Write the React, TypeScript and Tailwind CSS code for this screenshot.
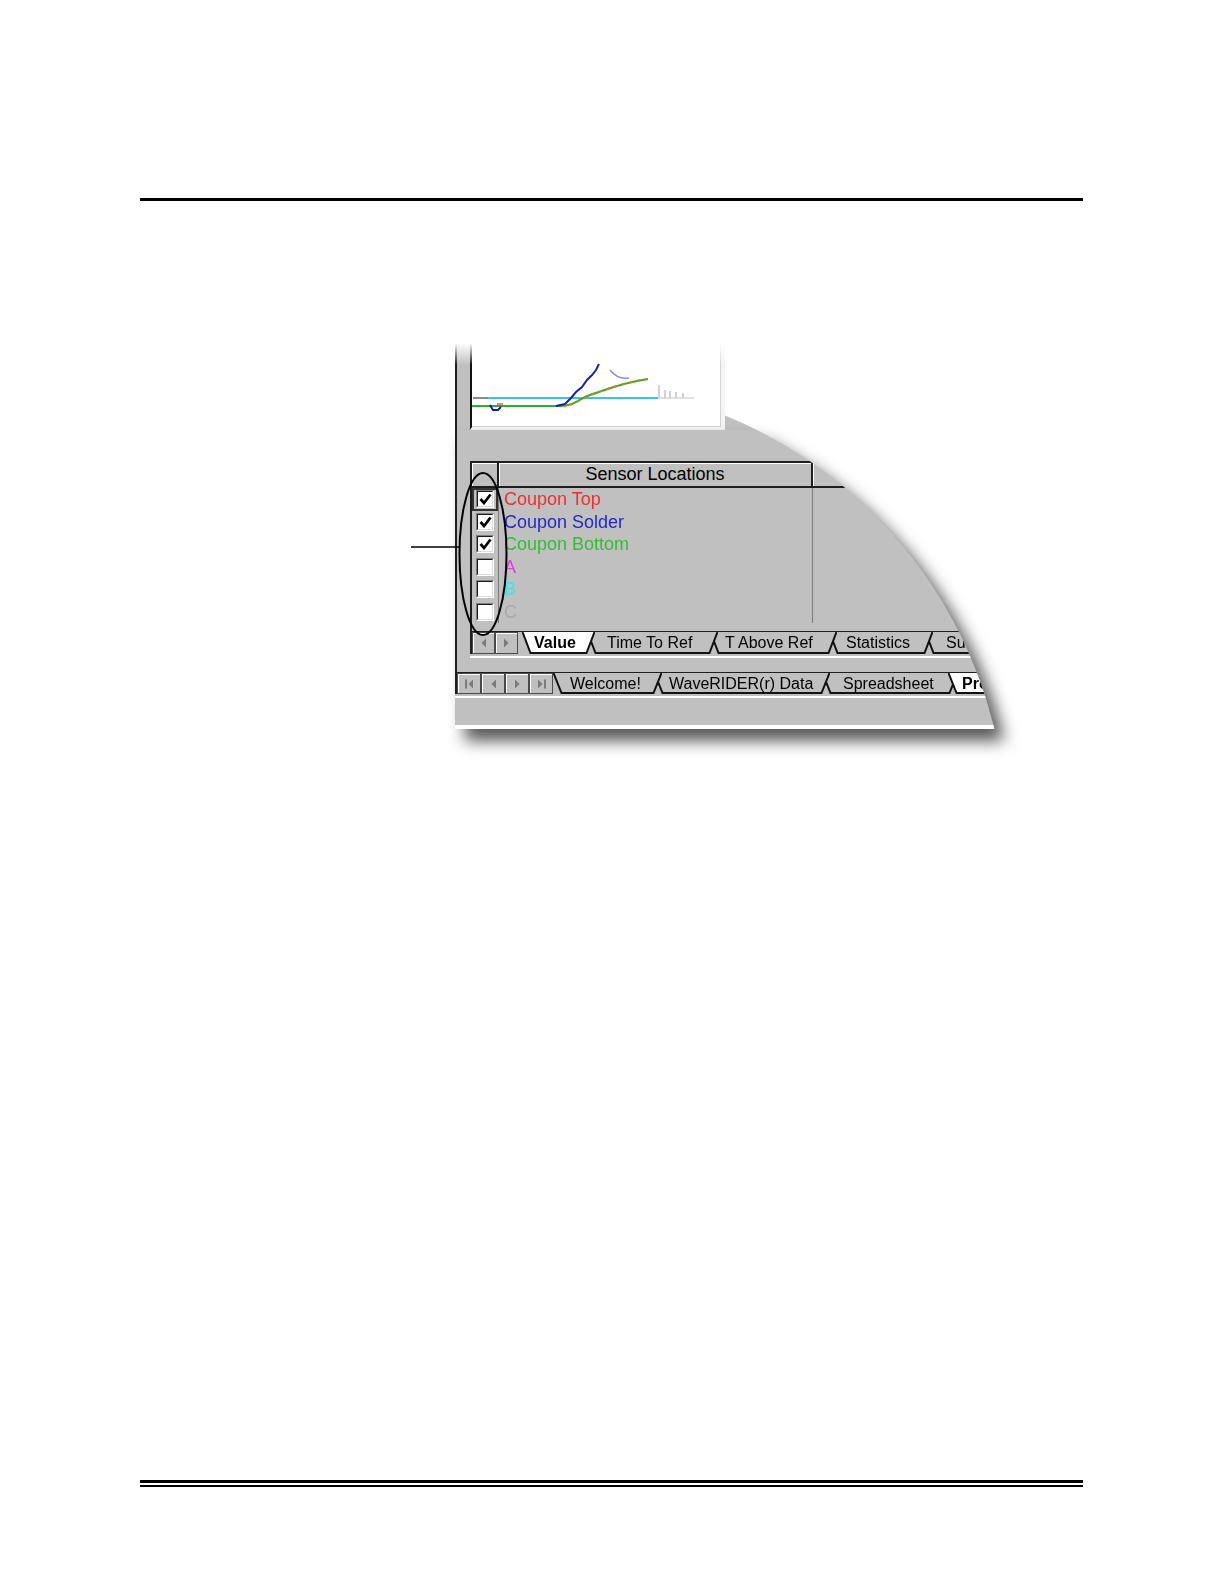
import React from "react";

type Row = { label: string; color: string; on: boolean };

const rows: Row[] = [
  { label: "Coupon Top", color: "text-[#ea3131]", on: true },
  { label: "Coupon Solder", color: "text-[#2727c4]", on: true },
  { label: "Coupon Bottom", color: "text-[#33bd33]", on: true },
  { label: "A", color: "text-[#e03ee0]", on: false },
  { label: "B", color: "text-[#3fe6e6]", on: false },
  { label: "C", color: "text-[#a9a9a9]", on: false },
];

function Arrow({ dir, bar }: { dir: "l" | "r"; bar?: boolean }) {
  const fill = "#7b7b7b";
  return (
    <svg width="9" height="10" viewBox="0 0 9 10">
      {dir === "l" ? (
        <>
          {bar && <rect x="0" y="0.5" width="2" height="9" fill={fill} />}
          <polygon points={bar ? "8,0.5 3.5,5 8,9.5" : "7,0.5 2.5,5 7,9.5"} fill={fill} />
        </>
      ) : (
        <>
          {bar && <rect x="7" y="0.5" width="2" height="9" fill={fill} />}
          <polygon points={bar ? "1,0.5 5.5,5 1,9.5" : "2,0.5 6.5,5 2,9.5"} fill={fill} />
        </>
      )}
    </svg>
  );
}

function NavButton({ children, className }: { children: React.ReactNode; className: string }) {
  return (
    <div
      className={`flex shrink-0 items-center justify-center border border-[#4a4a4a] bg-[#c0c0c0] shadow-[inset_1px_1px_0_#fff] ${className}`}
    >
      {children}
    </div>
  );
}

function Tab({
  label,
  width,
  height,
  active,
  className,
}: {
  label: string;
  width: number;
  height: number;
  active?: boolean;
  className: string;
}) {
  const h = height - 1;
  return (
    <div className={`relative shrink-0 ${className}`}>
      <svg className="absolute left-0 top-0" width={width} height={height}>
        <polygon points={`0,0 ${width},0 ${width - 8},${h} 8,${h}`} fill={active ? "#ffffff" : "#c0c0c0"} />
        <polyline
          points={`0.5,0 8.5,${h} ${width - 8.5},${h} ${width - 0.5},0`}
          fill="none"
          stroke="#111"
          strokeWidth="2"
        />
      </svg>
      <span className={`relative whitespace-nowrap text-[16px] text-black ${active ? "font-bold" : ""}`}>{label}</span>
    </div>
  );
}

function Check({ on }: { on: boolean }) {
  return (
    <div className="h-[18px] w-[18px] border border-t-[#808080] border-l-[#808080] border-b-white border-r-white">
      <div className="flex h-full w-full items-center justify-center border border-t-[#1c1c1c] border-l-[#1c1c1c] border-b-[#dcdcdc] border-r-[#dcdcdc] bg-white">
        {on && (
          <svg width="13" height="12" viewBox="0 0 13 12">
            <path d="M1.5 6 L5 10 L11.5 1.5" fill="none" stroke="#000" strokeWidth="2.7" />
          </svg>
        )}
      </div>
    </div>
  );
}

function Chart() {
  return (
    <svg width="248" height="84" viewBox="0 0 248 84">
      <path d="M1 55 H16" stroke="#8a8a8a" strokeWidth="2" />
      <path d="M16 55 H186" stroke="#3cc6d4" strokeWidth="2" />
      <g stroke="#c4c4c4" strokeWidth="1.5">
        <path d="M187 55 V42" />
        <path d="M193 55 V47" />
        <path d="M198 55 V48" />
        <path d="M204 55 V49" />
        <path d="M211 55 V50" />
        <path d="M186 55 H222" strokeWidth="1" />
      </g>
      <path d="M0 63 H88 C103 63 108 55 118 52 S148 40 176 36" fill="none" stroke="#2fae2f" strokeWidth="2" />
      <path
        d="M90 63 C103 63 108 55 118 52 S148 40 176 36"
        fill="none"
        stroke="#e07a1c"
        strokeWidth="2"
        strokeDasharray="3 5"
      />
      <path d="M18 62 L21 67 L26 67 L29 64" fill="none" stroke="#1b1b9a" strokeWidth="2" />
      <path d="M25 61 L31 61" stroke="#f08080" strokeWidth="2" />
      <path
        d="M84 63 L93 61 L99 55 L104 49 L110 44 L115 37 L120 32 L124 27 L127 21"
        fill="none"
        stroke="#1d1da6"
        strokeWidth="2"
      />
      <path d="M138 27 Q146 37 157 35" fill="none" stroke="#7070c8" strokeWidth="1.5" opacity="0.8" />
    </svg>
  );
}

function Figure() {
  return (
    <div className="relative ml-[455px] mt-[142px] w-[560px]">
      {/* upper part: chart */}
      <div className="flex h-[87px] w-[302px] bg-[#c0c0c0] [clip-path:path('M0,0_H270_V72.5_A453,453_0_0_1_302,87_H0_Z')]">
        <div className="w-[2px] shrink-0 bg-[#1e1e1e]" />
        <div className="w-[13px] shrink-0" />
        <div className="h-[87px] w-[255px] shrink-0 border-l-2 border-r-[4px] border-b-[3px] border-l-[#111] border-r-[#f4f4f4] border-b-[#f4f4f4] bg-white">
          <div className="h-full w-full border-r border-b border-[#d4d4d4]">
            <Chart />
          </div>
        </div>
      </div>

      {/* lower part: grid + tabs */}
      <div className="[filter:drop-shadow(10px_12px_8px_rgba(0,0,0,0.66))]">
        <div className="flex h-[299px] w-[545px] flex-col bg-[#c0c0c0] [clip-path:circle(453px_at_99px_405px)]">
          <div className="flex flex-col border-l-2 border-[#1e1e1e]">
            <div className="flex h-[228px]">
              <div className="ml-[13px] flex flex-1 flex-col pt-[31px]">
                <div className="flex flex-col border-l-2 border-[#1e1e1e]">
                  <div className="flex h-[27px] border-t-2 border-b-2 border-[#1e1e1e]">
                    <div className="w-[27px] shrink-0 border-r-2 border-[#1e1e1e] shadow-[inset_1px_1px_0_#fff]" />
                    <div className="flex w-[314px] shrink-0 items-center justify-center border-r-2 border-[#1e1e1e] text-[18px] text-black shadow-[inset_1px_1px_0_#fff]">
                      Sensor Locations
                    </div>
                    <div className="flex-1 shadow-[inset_1px_1px_0_#fff]" />
                  </div>
                  {rows.map((r, i) => (
                    <div key={r.label} className="flex h-[22.5px]">
                      <div
                        className={`flex w-[27px] shrink-0 items-center justify-center border-r border-[#7a7a7a] ${
                          i === 0 ? "shadow-[inset_0_0_0_2px_#333]" : ""
                        }`}
                      >
                        <Check on={r.on} />
                      </div>
                      <div
                        className={`w-[314px] shrink-0 border-r border-[#7a7a7a] pl-[5px] text-[18px] leading-[22.5px] ${r.color}`}
                      >
                        {r.label}
                      </div>
                    </div>
                  ))}
                  <div className="h-[8px]" />
                  <div className="flex h-[23px] border-t border-[#1e1e1e]">
                    <NavButton className="h-[22px] w-[23px]">
                      <Arrow dir="l" />
                    </NavButton>
                    <NavButton className="h-[22px] w-[23px]">
                      <Arrow dir="r" />
                    </NavButton>
                    <div className="ml-[4px] flex">
                      <Tab label="Value" width={73} height={22} active className="z-[10] h-[22px] w-[73px] pl-[12px] leading-[22px]" />
                      <Tab label="Time To Ref" width={131} height={22} className="z-[4] -ml-[8px] h-[22px] w-[131px] pl-[20px] leading-[22px]" />
                      <Tab label="T Above Ref" width={127} height={22} className="z-[3] -ml-[8px] h-[22px] w-[127px] pl-[15px] leading-[22px]" />
                      <Tab label="Statistics" width={104} height={22} className="z-[2] -ml-[8px] h-[22px] w-[104px] pl-[17px] leading-[22px]" />
                      <Tab label="Summary" width={100} height={22} className="z-[1] -ml-[8px] h-[22px] w-[100px] pl-[21px] leading-[22px]" />
                    </div>
                  </div>
                </div>
                <div className="mt-[2px] h-[2px] bg-white" />
              </div>
            </div>
            <div className="h-[14px]" />
            <div className="flex h-[22px] border-t border-[#1e1e1e]">
              <NavButton className="h-[21px] w-[24px]">
                <Arrow dir="l" bar />
              </NavButton>
              <NavButton className="h-[21px] w-[24px]">
                <Arrow dir="l" />
              </NavButton>
              <NavButton className="h-[21px] w-[24px]">
                <Arrow dir="r" />
              </NavButton>
              <NavButton className="h-[21px] w-[24px]">
                <Arrow dir="r" bar />
              </NavButton>
              <div className="flex">
                <Tab label="Welcome!" width={109} height={21} className="z-[4] h-[21px] w-[109px] pl-[17px] leading-[21px]" />
                <Tab label="WaveRIDER(r) Data" width={176} height={21} className="z-[3] -ml-[8px] h-[21px] w-[176px] pl-[15px] leading-[21px]" />
                <Tab label="Spreadsheet" width={136} height={21} className="z-[2] -ml-[8px] h-[21px] w-[136px] pl-[21px] leading-[21px]" />
                <Tab label="Profile" width={100} height={21} active className="z-[10] -ml-[10px] h-[21px] w-[100px] pl-[14px] leading-[21px]" />
              </div>
            </div>
          </div>
          <div className="mt-[2px] h-[2px] bg-white" />
          <div className="h-[27px]" />
          <div className="h-[4px] bg-white" />
        </div>
      </div>

      {/* fade at top of the clipped shot */}
      <div className="absolute left-0 top-0 h-[22px] w-[280px] bg-linear-to-b from-white to-transparent" />

      {/* callout */}
      <svg className="absolute left-[-50px] top-[127px] z-[20]" width="110" height="170" viewBox="0 0 110 170">
        <ellipse cx="78" cy="84" rx="23.5" ry="81" fill="none" stroke="#000" strokeWidth="2" />
        <path d="M6 77 H55" stroke="#000" strokeWidth="1.6" />
      </svg>
    </div>
  );
}

export default function App() {
  return (
    <div className="flex h-[1584px] w-[1224px] flex-col bg-white font-['Liberation_Sans',Arial,sans-serif]">
      <div className="ml-[140px] mt-[198px] h-[3px] w-[943px] bg-black" />
      <Figure />
      <div className="ml-[140px] mt-[751px] h-[3px] w-[943px] bg-black" />
      <div className="ml-[140px] mt-[2px] h-[2px] w-[943px] bg-black" />
    </div>
  );
}
